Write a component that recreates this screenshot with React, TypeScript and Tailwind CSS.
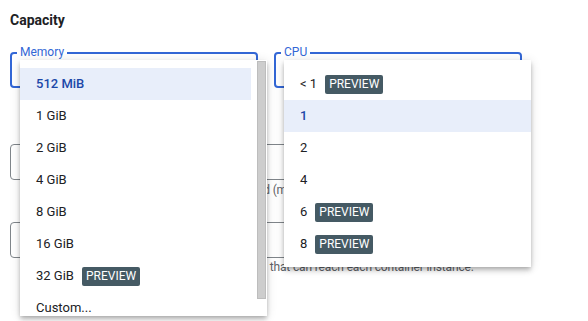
import React from 'react';

const memoryOptions = ['512 MiB', '1 GiB', '2 GiB', '4 GiB', '8 GiB', '16 GiB', '32 GiB', 'Custom...'];
const memoryPreview = ['32 GiB'];
const cpuOptions = ['< 1', '1', '2', '4', '6', '8'];
const cpuPreview = ['< 1', '6', '8'];

const menuShadow =
  'shadow-[0_2px_4px_-1px_rgba(0,0,0,0.2),0_4px_5px_0_rgba(0,0,0,0.14),0_1px_10px_0_rgba(0,0,0,0.12)]';

const PreviewBadge: React.FC = () => (
  <span className="ml-[8px] flex h-[19px] items-center rounded-[2px] bg-[#455a64] px-[4px] text-[12px] leading-[16px] text-white">
    PREVIEW
  </span>
);

const MenuRow: React.FC<{ label: string; selected: boolean; preview: boolean }> = ({ label, selected, preview }) => (
  <div
    className={`flex h-[32px] items-center pl-[16px] text-[13px] ${
      selected ? 'bg-[#e8eefa] font-medium text-[#1c48a8]' : 'text-[#202124]'
    }`}
  >
    <span>{label}</span>
    {preview && <PreviewBadge />}
  </div>
);

// focused outlined select (menu open)
const FocusedField: React.FC<{ label: string }> = ({ label }) => (
  <div className="relative h-[36px] rounded-[4px] border-2 border-[#3367d6]">
    <span className="absolute left-[5px] top-[-10px] bg-white px-[3px] text-[12px] leading-[16px] text-[#3367d6]">
      {label}
    </span>
  </div>
);

// outlined input; its label and value sit under the open menus
const OutlinedField: React.FC = () => (
  <div className="h-[36px] w-[512px] rounded-[4px] border border-[#80868b]" />
);

const App: React.FC = () => {
  return (
    <div className="relative h-[321px] w-[588px] overflow-hidden bg-white px-[10px] pt-[10px] font-['Roboto',sans-serif]">
      <h2 className="text-[14px] font-bold leading-[20px] text-[#202124]">Capacity</h2>

      {/* Memory / CPU selects */}
      <div className="mt-[22px] grid w-[512px] grid-cols-[248px_248px] gap-[16px]">
        <FocusedField label="Memory" />
        <FocusedField label="CPU" />
      </div>

      {/* Request timeout */}
      <div className="mt-[56px]">
        <OutlinedField />
        <p className="mt-[2px] pl-[14px] text-[12px] leading-[16px] tracking-[-0.14px] text-[#5f6368]">
          Time within which a response must be returned (maximum 3600 seconds).
        </p>
      </div>

      {/* Max requests */}
      <div className="mt-[24px]">
        <OutlinedField />
        <p className="mt-[1px] pl-[18px] text-[12px] leading-[16px] tracking-[-0.14px] text-[#5f6368]">
          The maximum number of concurrent requests that can reach each container instance.
        </p>
      </div>

      {/* Memory menu (open) */}
      <div className={`absolute left-[20px] top-[60px] h-[256px] w-[247px] overflow-hidden bg-white ${menuShadow}`}>
        <div className="pr-[16px] pt-[8px]">
          {memoryOptions.map((m) => (
            <MenuRow key={m} label={m} selected={m === '512 MiB'} preview={memoryPreview.includes(m)} />
          ))}
        </div>
        <div className="absolute right-[1px] top-[1px] h-[238px] w-[9px] border border-[#bdbdbd] bg-[#cdcdcd]" />
      </div>

      {/* CPU menu (open) */}
      <div className={`absolute left-[284px] top-[60px] w-[247px] bg-white pb-[7px] pt-[8px] ${menuShadow}`}>
        {cpuOptions.map((c) => (
          <MenuRow key={c} label={c} selected={c === '1'} preview={cpuPreview.includes(c)} />
        ))}
      </div>
    </div>
  );
};

export default App;
